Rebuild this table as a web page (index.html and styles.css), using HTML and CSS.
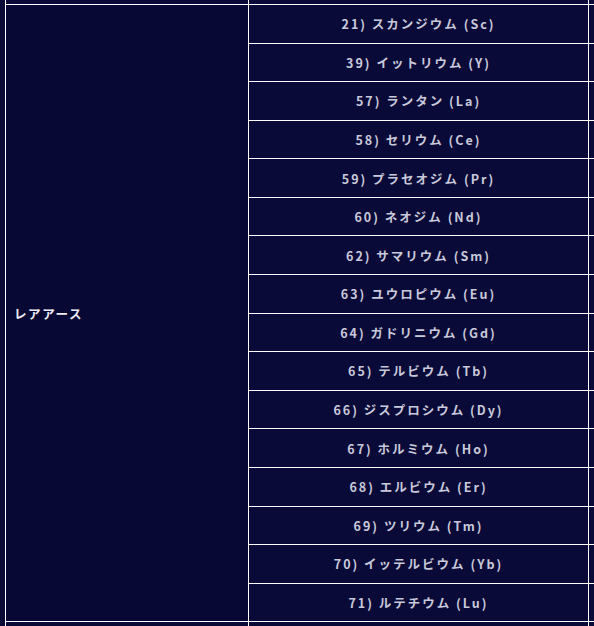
FILE: index.html
```html
<!DOCTYPE html>
<html lang="ja">
<head>
<meta charset="utf-8">
<link rel="stylesheet" href="styles.css">
</head>
<body>
<div class="wrap">
<table class="grid">
<colgroup><col class="c1"><col class="c2"><col class="c3"></colgroup>
<tr class="prev"><td></td><td></td><td></td></tr>
<tr><td class="label" rowspan="16">レアアース</td><td class="el">21) スカンジウム (Sc)</td><td></td></tr>
<tr><td class="el">39) イットリウム (Y)</td><td></td></tr>
<tr><td class="el">57) ランタン (La)</td><td></td></tr>
<tr><td class="el">58) セリウム (Ce)</td><td></td></tr>
<tr><td class="el">59) プラセオジム (Pr)</td><td></td></tr>
<tr><td class="el">60) ネオジム (Nd)</td><td></td></tr>
<tr><td class="el">62) サマリウム (Sm)</td><td></td></tr>
<tr><td class="el">63) ユウロピウム (Eu)</td><td></td></tr>
<tr><td class="el">64) ガドリニウム (Gd)</td><td></td></tr>
<tr><td class="el">65) テルビウム (Tb)</td><td></td></tr>
<tr><td class="el">66) ジスプロシウム (Dy)</td><td></td></tr>
<tr><td class="el">67) ホルミウム (Ho)</td><td></td></tr>
<tr><td class="el">68) エルビウム (Er)</td><td></td></tr>
<tr><td class="el">69) ツリウム (Tm)</td><td></td></tr>
<tr><td class="el">70) イッテルビウム (Yb)</td><td></td></tr>
<tr><td class="el">71) ルテチウム (Lu)</td><td></td></tr>
<tr class="next"><td></td><td></td><td></td></tr>
</table>
</div>
</body>
</html>
```
FILE: styles.css
```css
html, body {
  margin: 0;
  padding: 0;
  background: #0a0a36;
  overflow: hidden;
}
.wrap {
  width: 594px;
  height: 626px;
  overflow: hidden;
  padding-left: 5px;
  box-sizing: border-box;
}
.grid {
  border-collapse: collapse;
  table-layout: fixed;
  width: 683px;
  font-family: "Noto Sans CJK JP", "Noto Sans", sans-serif;
  font-weight: 700;
}
.c1 { width: 243px; }
.c2 { width: 340px; }
.c3 { width: 100px; }
.grid td {
  border: 1px solid #ffffff;
  padding: 0;
  height: 37.58px;
  background: #0a0a38;
}
.grid tr.prev td {
  border-top: none;
  height: 4px;
}
.grid tr.next td {
  border-bottom: none;
  height: 40px;
}
.grid td.label {
  background: #080834;
  color: #ececf4;
  font-size: 12.5px;
  letter-spacing: 1.6px;
  padding-left: 8px;
  text-align: left;
}
.grid td.el {
  color: #c8c9da;
  font-size: 12.5px;
  letter-spacing: 2px;
  text-align: center;
}
```
